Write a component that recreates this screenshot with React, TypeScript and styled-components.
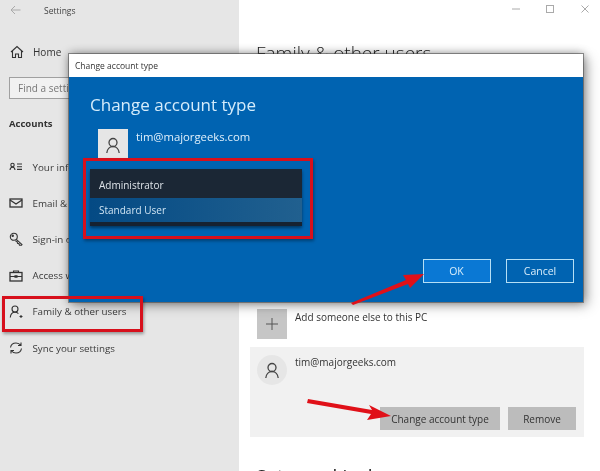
import React from "react";
import styled, { createGlobalStyle } from "styled-components";

const Global = createGlobalStyle`
  html, body { margin: 0; padding: 0; background: #fff; }
  body { width: 600px; height: 471px; overflow: hidden; font-family: "Open Sans", "Liberation Sans", sans-serif; }
  #root { width: 600px; height: 471px; }
`;

const Page = styled.div`
  position: relative;
  display: flex;
  width: 600px;
  height: 471px;
  overflow: hidden;
  background: #fff;
  filter: blur(0.4px);
`;

const Sidebar = styled.aside`
  width: 239px;
  flex: none;
  background: #e6e6e6;
  color: #333;
  display: flex;
  flex-direction: column;
`;

const AppBar = styled.div`
  height: 20px;
  flex: none;
  display: flex;
  align-items: center;
  gap: 23px;
  padding: 0 0 0 10px;
  font-size: 8.5px;
  color: #444;
`;

const Back = styled.svg`
  width: 11px;
  height: 10px;
  color: #aaa;
`;

const HomeRow = styled.div`
  margin-top: 22px;
  height: 20px;
  flex: none;
  display: flex;
  align-items: center;
  gap: 9px;
  padding-left: 10px;
  font-size: 10px;
`;

const Search = styled.div`
  margin: 15px 0 0 9px;
  width: 130px;
  height: 22px;
  flex: none;
  box-sizing: border-box;
  border: 1.5px solid #a0a0a0;
  background: #f1f1f1;
  color: #777;
  font-size: 10px;
  display: flex;
  align-items: center;
  padding-left: 8px;
`;

const SectionLabel = styled.div`
  margin: 16px 0 0 9px;
  height: 18px;
  flex: none;
  line-height: 18px;
  font-size: 9.5px;
  font-weight: 700;
  color: #333;
`;

const NavList = styled.nav`
  margin-top: 16px;
  display: flex;
  flex-direction: column;
`;

const NavItem = styled.div`
  height: 36.2px;
  display: flex;
  align-items: center;
  gap: 9.5px;
  padding-left: 9px;
  font-size: 9.8px;
  color: #3a3a3a;
  white-space: nowrap;
`;

const NavIcon = styled.svg`
  width: 14px;
  height: 14px;
  flex: none;
  fill: none;
  stroke: #333;
  stroke-width: 1.1;
`;

const Main = styled.main`
  flex: 1;
  min-width: 0;
  padding: 0 16px 0 11px;
  display: flex;
  flex-direction: column;
  align-items: stretch;
`;

const WindowControls = styled.div`
  height: 18px;
  flex: none;
  margin-right: -5.5px;
  display: flex;
  justify-content: flex-end;
  align-items: center;
  gap: 24.5px;
`;

const Ctl = styled.svg`
  width: 10px;
  height: 10px;
  fill: none;
  stroke: #aaa;
  stroke-width: 1;
`;

const PageTitle = styled.h1`
  margin: 21px 0 0 6px;
  height: 28px;
  flex: none;
  font-size: 19px;
  line-height: 28px;
  font-weight: 300;
  color: #222;
  white-space: nowrap;
`;

const AddRow = styled.div`
  margin: 242px 0 0 7px;
  flex: none;
  display: flex;
  align-items: flex-start;
  gap: 8px;
  font-size: 10px;
  color: #333;
`;

const AddBox = styled.div`
  width: 30px;
  height: 30px;
  background: #c6c6c6;
  display: flex;
  align-items: center;
  justify-content: center;
`;

const AddLabel = styled.span`
  margin-top: 1px;
`;

const UserCard = styled.section`
  margin-top: 8px;
  height: 90px;
  flex: none;
  box-sizing: border-box;
  background: #f1f1f1;
  padding: 8px 8px 7px 7px;
  display: flex;
  flex-direction: column;
  justify-content: space-between;
`;

const UserRow = styled.div`
  display: flex;
  gap: 8px;
  font-size: 10px;
  color: #333;
`;

const Circle = styled.div`
  width: 30px;
  height: 30px;
  border-radius: 50%;
  background: #e6e6e6;
  display: flex;
  align-items: center;
  justify-content: center;
`;

const Actions = styled.div`
  display: flex;
  justify-content: flex-end;
  gap: 8px;
`;

const GreyButton = styled.button<{ $w: number }>`
  width: ${(p) => p.$w}px;
  height: 23px;
  border: 0;
  padding: 0;
  background: #bcbcbc;
  color: #333;
  font: 10px "Open Sans", sans-serif;
`;

const NextHeading = styled.h2`
  margin: 25px 0 0 6px;
  flex: none;
  font-size: 19px;
  line-height: 28px;
  font-weight: 400;
  color: #222;
  white-space: nowrap;
`;

const Dialog = styled.div`
  position: absolute;
  left: 69px;
  top: 54px;
  width: 514px;
  height: 248px;
  display: flex;
  flex-direction: column;
  box-shadow: 0 0 0 1px rgba(70, 70, 70, 0.55), 0 0 9px rgba(0, 0, 0, 0.45), 5px 4px 12px rgba(0, 0, 0, 0.25);
`;

const DialogBar = styled.div`
  height: 23px;
  flex: none;
  background: #fff;
  display: flex;
  align-items: center;
  padding-left: 6px;
  font-size: 8.5px;
  color: #333;
`;

const DialogBody = styled.div`
  flex: 1;
  background: #0063b1;
  padding: 15px 9px 0 21px;
  display: flex;
  flex-direction: column;
  color: #fff;
`;

const DialogTitle = styled.div`
  font-size: 17px;
  line-height: 26px;
  color: #d4ecfb;
`;

const DialogUser = styled.div`
  margin: 11px 0 0 8px;
  display: flex;
  gap: 8px;
  font-size: 11.3px;
  color: #e0f0fb;
`;

const UserTile = styled.div`
  width: 30px;
  height: 30px;
  padding-top: 2px;
  box-sizing: border-box;
  background: #e6e6e6;
  display: flex;
  align-items: center;
  justify-content: center;
`;

const Dropdown = styled.div`
  margin-top: 10px;
  width: 212px;
  height: 57px;
  background: #162231;
  box-shadow: 0 2px 3px rgba(0, 0, 0, 0.45);
  display: flex;
  flex-direction: column;
  font-size: 10px;
`;

const Option = styled.div<{ $selected?: boolean }>`
  height: ${(p) => (p.$selected ? 24 : 29)}px;
  box-sizing: border-box;
  padding: ${(p) => (p.$selected ? "0" : "3px")} 0 0 9px;
  display: flex;
  align-items: center;
  color: ${(p) => (p.$selected ? "#cfe4f3" : "#dde3e8")};
  background: ${(p) =>
    p.$selected ? "linear-gradient(90deg, #044a84, #21608f)" : "#1b2735"};
`;

const DialogActions = styled.div`
  margin-top: auto;
  margin-bottom: 19.5px;
  display: flex;
  justify-content: flex-end;
  gap: 15.5px;
`;

const DialogButton = styled.button<{ $primary?: boolean }>`
  width: 68px;
  height: 24px;
  box-sizing: border-box;
  border: 1.5px solid #b5dff5;
  padding: 0;
  color: #d9eefb;
  background: ${(p) => (p.$primary ? "#0a78d4" : "#0063b1")};
  font: 10.5px "Open Sans", sans-serif;
`;

const RedBox = styled.div<{ $l: number; $t: number; $w: number; $h: number }>`
  position: absolute;
  left: ${(p) => p.$l}px;
  top: ${(p) => p.$t}px;
  width: ${(p) => p.$w}px;
  height: ${(p) => p.$h}px;
  box-sizing: border-box;
  border: 3.5px solid #d7101c;
  box-shadow: 1px 2px 3px rgba(0, 0, 0, 0.35);
`;

const ArrowLayer = styled.svg`
  position: absolute;
  left: 0;
  top: 0;
  width: 600px;
  height: 471px;
  pointer-events: none;
`;

const Person = ({ c = "#444" }: { c?: string }) => (
  <svg width="16" height="17" viewBox="0 0 16 17" fill="none" stroke={c} strokeWidth="1.3">
    <circle cx="8" cy="5.500" r="4" />
    <path d="M1.800 16c.3-3.800 2.800-6.500 6.200-6.500s5.900 2.700 6.200 6.500" />
  </svg>
);

export default function App() {
  return (
    <Page>
      <Global />
      <Sidebar>
        <AppBar>
          <Back viewBox="0 0 11 10" fill="none" stroke="currentColor" strokeWidth="1">
            <path d="M10.500 5H1M5 1 1 5l4 4" />
          </Back>
          <span>Settings</span>
        </AppBar>
        <HomeRow>
          <NavIcon viewBox="0 0 14 14"><path d="M1 7 7 1.500 13 7M2.500 6v6.500h3V9h3v3.500h3V6" /></NavIcon>
          Home
        </HomeRow>
        <Search>Find a setting</Search>
        <SectionLabel>Accounts</SectionLabel>
        <NavList>
          <NavItem>
            <NavIcon viewBox="0 0 14 14"><circle cx="3.500" cy="5" r="1.700" /><path d="M1 10c.2-1.800 1.100-2.800 2.500-2.800S5.800 8.200 6 10M8 4h5M8 6.700h5M8 9.400h5" /></NavIcon>
            Your info
          </NavItem>
          <NavItem>
            <NavIcon viewBox="0 0 14 14"><rect x="1" y="3" width="12" height="8" strokeWidth="1.300" /><path d="m1 4 6 4 6-4" strokeWidth="1.300" /></NavIcon>
            Email &amp; accounts
          </NavItem>
          <NavItem>
            <NavIcon viewBox="0 0 14 14"><circle cx="4.800" cy="4.800" r="3.500" /><circle cx="3.700" cy="3.700" r=".7" /><path d="m7.300 7.300 5.700 5.200-.5.800h-2l-.5-1.500-1.500-.5-.3-1.500-1.800-1" /></NavIcon>
            Sign-in options
          </NavItem>
          <NavItem>
            <NavIcon viewBox="0 0 14 14"><rect x="1" y="3.500" width="12" height="8.500" strokeWidth="1.300" /><path d="M4.500 3.500V2h5v1.500M1 7.500h12M6 6.700h2v1.600H6z" /></NavIcon>
            Access work or school
          </NavItem>
          <NavItem>
            <NavIcon viewBox="0 0 14 14"><circle cx="6" cy="4" r="3" /><path d="M1.300 12.500c.2-3 2-5.200 4.700-5.200 1.500 0 2.600.5 3.400 1.300M10.500 11.500h3M12 10v3" /></NavIcon>
            Family &amp; other users
          </NavItem>
          <NavItem>
            <NavIcon viewBox="0 0 14 14"><path d="M1.500 6.500C2 3.700 4.300 2 7 2c2.200 0 3.800 1 4.800 2.500M12.500 7.500C12 10.300 9.700 12 7 12c-2.200 0-3.800-1-4.800-2.500M12 1.500v3H9M2 12.500v-3h3" /></NavIcon>
            Sync your settings
          </NavItem>
        </NavList>
      </Sidebar>
      <Main>
        <WindowControls>
          <Ctl viewBox="0 0 10 10"><path d="M1 5h8" /></Ctl>
          <Ctl viewBox="0 0 10 10"><rect x="1.500" y="1.500" width="7" height="7" /></Ctl>
          <Ctl viewBox="0 0 10 10"><path d="m1.500 1.500 7 7M8.500 1.500l-7 7" /></Ctl>
        </WindowControls>
        <PageTitle>Family &amp; other users</PageTitle>
        <AddRow>
          <AddBox>
            <svg width="14" height="14" viewBox="0 0 14 14" stroke="#555" strokeWidth="1"><path d="M7 1v12M1 7h12" /></svg>
          </AddBox>
          <AddLabel>Add someone else to this PC</AddLabel>
        </AddRow>
        <UserCard>
          <UserRow>
            <Circle><Person /></Circle>
            <span>tim@majorgeeks.com</span>
          </UserRow>
          <Actions>
            <GreyButton $w={120}>Change account type</GreyButton>
            <GreyButton $w={68}>Remove</GreyButton>
          </Actions>
        </UserCard>
        <NextHeading>Set up a kiosk</NextHeading>
      </Main>

      <Dialog>
        <DialogBar>Change account type</DialogBar>
        <DialogBody>
          <DialogTitle>Change account type</DialogTitle>
          <DialogUser>
            <UserTile><Person /></UserTile>
            <span>tim@majorgeeks.com</span>
          </DialogUser>
          <Dropdown>
            <Option>Administrator</Option>
            <Option $selected>Standard User</Option>
          </Dropdown>
          <DialogActions>
            <DialogButton $primary>OK</DialogButton>
            <DialogButton>Cancel</DialogButton>
          </DialogActions>
        </DialogBody>
      </Dialog>

      <RedBox $l={83} $t={158} $w={230} $h={81} />
      <RedBox $l={2} $t={296} $w={141} $h={36} />

      <ArrowLayer viewBox="0 0 600 471">
        <g fill="#e01018">
          <path d="M351 303 L406 280 L403 275 L424 274 L410 288 L408 284 L353 305 Z" />
          <path d="M308 399 L372 410 L369 405 L391 416 L367 420 L371 414 L307 403 Z" />
        </g>
      </ArrowLayer>
    </Page>
  );
}
